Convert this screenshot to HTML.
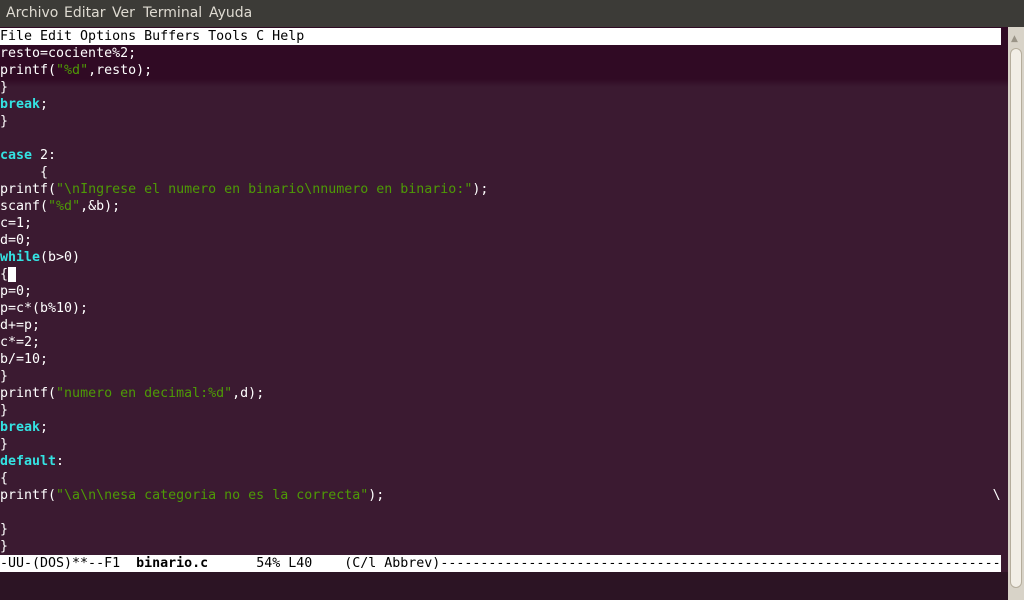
<!DOCTYPE html>
<html><head><meta charset="utf-8"><style>
html,body{margin:0;padding:0;width:1024px;height:600px;overflow:hidden;background:#3a1a30;}
#top{position:absolute;left:0;top:0;width:1024px;height:27px;background:#3c3b37;color:#dfdbd2;font:14px "DejaVu Sans","Liberation Sans",sans-serif;}
#top span{position:absolute;top:5px}
#term{position:absolute;left:0;top:27px;width:1008px;height:545px;background:linear-gradient(#300a24 0,#300a24 52px,#3b1a31 60px,#3b1a31 100%);}
.mono{font-family:"DejaVu Sans Mono","Liberation Mono",monospace;font-size:13.3px;white-space:pre;}
#menu{position:absolute;left:0;top:28px;width:1001px;height:17px;background:#fff;color:#000;line-height:17px;}
#code{position:absolute;left:0;top:45px;color:#fff;line-height:17px;}
.k{color:#34e2e2;font-weight:bold}
.s{color:#4e9a06}
#mode{position:absolute;left:0;top:555px;width:1001px;height:17px;background:#fff;color:#000;line-height:17px;overflow:hidden}
#task{position:absolute;left:0;top:572px;width:1008px;height:28px;background:#2c1424;}
#sb{position:absolute;left:1008px;top:27px;width:16px;height:573px;background:#d8d3c8;}
#arr{position:absolute;left:1011px;top:34px;color:#9a9487;font-size:9px;font-family:"DejaVu Sans",sans-serif}
#thumb{position:absolute;left:1010px;top:48px;width:12px;height:540px;background:#f2eee6;border:1px solid #b5ad9c;border-radius:6px;box-sizing:border-box}
.cur{background:#fff;color:#000}
</style></head><body>
<div id="top"><span style="left:6px">Archivo</span><span style="left:64px">Editar</span><span style="left:112px">Ver</span><span style="left:143px">Terminal</span><span style="left:209px">Ayuda</span></div>
<div id="term"></div>
<div id="menu" class="mono">File Edit Options Buffers Tools C Help</div>
<div id="code" class="mono">resto=cociente%2;
printf(<span class="s">"%d"</span>,resto);
}
<span class="k">break</span>;
}

<span class="k">case</span> 2:
     {
printf(<span class="s">"\nIngrese el numero en binario\nnumero en binario:"</span>);
scanf(<span class="s">"%d"</span>,&amp;b);
c=1;
d=0;
<span class="k">while</span>(b&gt;0)
{<span class="cur"> </span>
p=0;
p=c*(b%10);
d+=p;
c*=2;
b/=10;
}
printf(<span class="s">"numero en decimal:%d"</span>,d);
}
<span class="k">break</span>;
}
<span class="k">default</span>:
{
printf(<span class="s">"\a\n\nesa categoria no es la correcta"</span>);                                                                            \

}
}</div>
<div id="mode" class="mono">-UU-(DOS)**--F1  <b>binario.c</b>      54% L40    (C/l Abbrev)-------------------------------------------------------------------------</div>
<div id="task"></div>
<div id="sb"></div><div id="arr">▲</div><div id="thumb"></div>
</body></html>
